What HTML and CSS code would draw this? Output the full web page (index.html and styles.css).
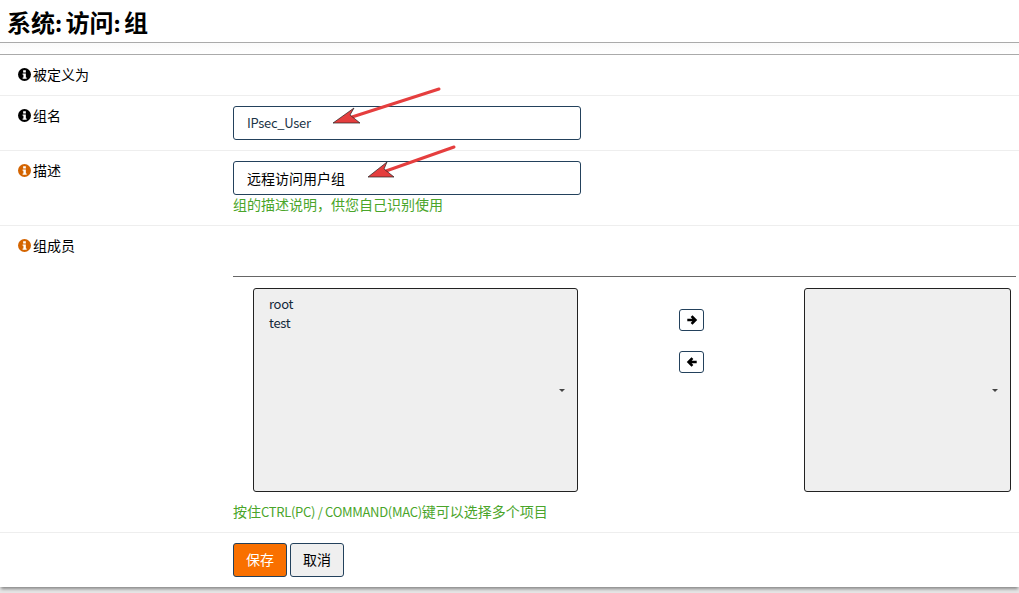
FILE: index.html
```
<!DOCTYPE html>
<html lang="zh-CN">
<head>
<meta charset="utf-8">
<title>系统: 访问: 组</title>
<link rel="stylesheet" href="styles.css">
</head>
<body>
<header class="title-bar"><h1>系统<span class="lt">: </span>访问<span class="lt">: </span>组</h1></header>
<main class="panel">
  <div class="row row-first">
    <div class="label"><svg class="info" viewBox="0 0 24 24"><circle cx="12" cy="12" r="12"/><path class="i-mark" d="M9.5 4h5v4.500h-5zM8.500 10h6v7.500H16V20H8.500v-2.500H10V12.500H8.500z"/></svg>被定义为</div>
    <div></div>
  </div>
  <div class="row">
    <div class="label"><svg class="info" viewBox="0 0 24 24"><circle cx="12" cy="12" r="12"/><path class="i-mark" d="M9.5 4h5v4.500h-5zM8.500 10h6v7.500H16V20H8.500v-2.500H10V12.500H8.500z"/></svg>组名</div>
    <div><div class="input input-latin"><span class="lt">IPsec_User</span></div></div>
  </div>
  <div class="row">
    <div class="label"><svg class="info orange" viewBox="0 0 24 24"><circle cx="12" cy="12" r="12"/><path class="i-mark" d="M9.5 4h5v4.500h-5zM8.500 10h6v7.500H16V20H8.500v-2.500H10V12.500H8.500z"/></svg>描述</div>
    <div>
      <div class="input">远程访问用户组</div>
      <div class="help">组的描述说明，供您自己识别使用</div>
    </div>
  </div>
  <div class="row">
    <div class="label"><svg class="info orange" viewBox="0 0 24 24"><circle cx="12" cy="12" r="12"/><path class="i-mark" d="M9.5 4h5v4.500h-5zM8.500 10h6v7.500H16V20H8.500v-2.500H10V12.500H8.500z"/></svg>组成员</div>
    <div class="members">
      <div class="rule"></div>
      <div class="pickers">
        <div class="listbox list-left"><div class="lt">root</div><div class="lt">test</div><span class="caret"></span></div>
        <div class="movers">
          <button class="mover" type="button"><svg viewBox="0 0 14 14"><path d="M1.500 7h9M6.500 2.500 11 7l-4.500 4.500"/></svg></button>
          <button class="mover" type="button"><svg viewBox="0 0 14 14"><path d="M12.500 7h-9M7.500 2.500 3 7l4.500 4.500"/></svg></button>
        </div>
        <div class="listbox list-right"><span class="caret"></span></div>
      </div>
      <div class="help help-members">按住<span class="lt">CTRL(PC) / COMMAND(MAC)</span>键可以选择多个项目</div>
    </div>
  </div>
  <div class="row row-last">
    <div></div>
    <div class="actions">
      <button class="btn btn-primary" type="button">保存</button>
      <button class="btn" type="button">取消</button>
    </div>
  </div>
</main>
<svg class="annotations" viewBox="0 0 1019 593" width="1019" height="593">
  <line class="shaft" x1="439" y1="89" x2="352" y2="117"/>
  <path class="head" d="M333 123 354 108 350 115 360 123Z"/>
  <line class="shaft" x1="454" y1="147" x2="386" y2="171"/>
  <path class="head" d="M368 177 387 162 384 169 394 177Z"/>
</svg>
</body>
</html>
```
FILE: styles.css
```
* { box-sizing: border-box; }
html, body { margin: 0; padding: 0; }
body {
  position: relative;
  width: 1019px;
  height: 593px;
  overflow: hidden;
  background: #e5e5e5;
  color: #000;
  font-family: "Noto Sans CJK SC", "Noto Sans", sans-serif;
  font-size: 14px;
  line-height: 20px;
}
.lt { font-size: 13px; letter-spacing: -.3px; }
h1 .lt { font-size: 22px; letter-spacing: -.8px; }
.title-bar {
  height: 43px;
  background: #fff;
  border-bottom: 1px solid #aaa;
  padding: 5px 7px 0;
}
h1 {
  margin: 0;
  font-size: 24px;
  line-height: 34px;
  font-weight: 700;
}
.panel {
  padding-top: 11px;
  background: linear-gradient(#fafafa, #fff 11px);
  box-shadow: 0 3px 3px -1px rgba(0, 0, 0, .4);
}
.row {
  display: grid;
  grid-template-columns: 233px 1fr;
  padding: 10px 3px 10px 0;
  background: #fff;
  border-bottom: 1px solid #eee;
}
.row-first { border-top: 1px solid #aaa; height: 42px; }
.row-last { border-bottom: 0; height: 54px; }
.label {
  display: flex;
  align-items: center;
  gap: 2px;
  height: 18px;
  padding-left: 18px;
}
.info { width: 13px; height: 13px; fill: #000; flex: none; }
.info.orange { fill: #d46400; }
.i-mark { fill: #fff; }
.input {
  width: 348px;
  height: 34px;
  padding: 0 13px;
  border: 1px solid #23415c;
  border-radius: 3px;
  line-height: 32px;
  background: #fff;
}
.input-latin { color: #1b3447; line-height: 30px; }
.help { color: #4aa52a; height: 20px; line-height: 18px; }
.rule { height: 1px; margin-top: 40px; background: #666; }
.pickers { display: flex; margin-top: 11px; padding-left: 20px; }
.listbox {
  position: relative;
  height: 204px;
  padding: 5px 15px;
  border: 1px solid #222;
  border-radius: 3px;
  background: #efefef;
  color: #12283a;
  line-height: 19px;
}
.list-left { width: 325px; }
.list-right { width: 207px; }
.caret {
  position: absolute;
  right: 12px;
  top: 100px;
  border: 3.5px solid transparent;
  border-top-color: #444;
  border-bottom: 0;
}
.movers {
  display: flex;
  flex-direction: column;
  gap: 20px;
  width: 25px;
  margin: 21px 100px 0 101px;
}
.mover {
  display: flex;
  align-items: center;
  justify-content: center;
  width: 25px;
  height: 22px;
  padding: 0;
  border: 1px solid #23415c;
  border-radius: 3px;
  background: #fff;
}
.mover svg {
  width: 12px;
  height: 12px;
  fill: none;
  stroke: #000;
  stroke-width: 3;
}
.help-members { margin-top: 10px; }
.actions { display: flex; gap: 3px; }
.btn {
  width: 54px;
  height: 34px;
  padding: 0 0 2px;
  border: 1px solid #23415c;
  border-radius: 3px;
  background: #efefef;
  color: #000;
  font: inherit;
}
.btn-primary { background: #f97000; color: #fff; }
.annotations { position: absolute; left: 0; top: 0; pointer-events: none; }
.shaft { stroke: #e53e3e; stroke-width: 3; stroke-linecap: round; }
.head { fill: #e53e3e; stroke: #222; stroke-width: .7; }
```
